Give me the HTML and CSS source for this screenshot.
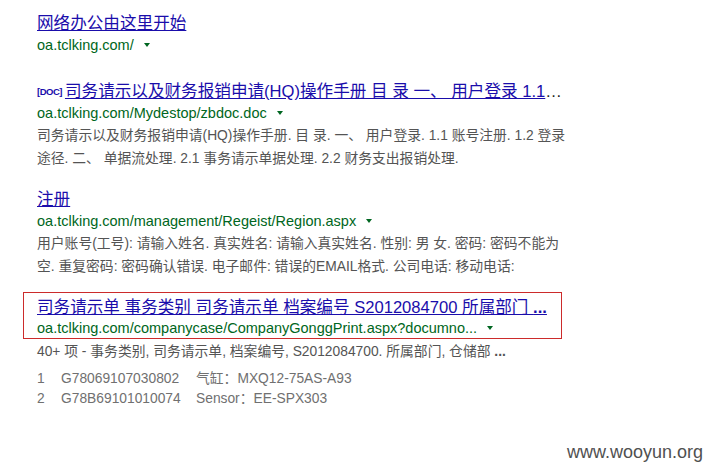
FILE: index.html
```html
<!DOCTYPE html>
<html lang="zh-CN">
<head>
<meta charset="utf-8">
<title>搜索结果</title>
<link rel="stylesheet" href="styles.css">
</head>
<body>
<div class="results">
  <div class="result result--nosnip">
    <a class="title" href="#">网络办公由这里开始</a>
    <div class="url">oa.tclking.com/<span class="arrow"></span></div>
  </div>

  <div class="result">
    <div class="title-row"><span class="filetype">[DOC]</span><a class="title" href="#">司务请示以及财务报销申请(HQ)操作手册 目 录 一、 用户登录 1.1</a>…</div>
    <div class="url">oa.tclking.com/Mydestop/zbdoc.doc<span class="arrow"></span></div>
    <div class="snippet">司务请示以及财务报销申请(HQ)操作手册. 目 录. 一、 用户登录. 1.1 账号注册. 1.2 登录<br>途径. 二、 单据流处理. 2.1 事务请示单据处理. 2.2 财务支出报销处理.</div>
  </div>

  <div class="result">
    <a class="title" href="#">注册</a>
    <div class="url">oa.tclking.com/management/Regeist/Region.aspx<span class="arrow"></span></div>
    <div class="snippet">用户账号(工号): 请输入姓名. 真实姓名: 请输入真实姓名. 性别: 男 女. 密码: 密码不能为<br>空. 重复密码: 密码确认错误. 电子邮件: 错误的EMAIL格式. 公司电话: 移动电话:</div>
  </div>

  <div class="result result--boxed">
    <div class="highlight">
      <a class="title" href="#">司务请示单 事务类别 司务请示单 档案编号 S2012084700 所属部门 <b>...</b></a>
      <div class="url">oa.tclking.com/companycase/CompanyGonggPrint.aspx?documno...<span class="arrow"></span></div>
    </div>
    <div class="snippet">40+ 项 - 事务类别, 司务请示单, 档案编号, S2012084700. 所属部门, 仓储部 <b>...</b></div>
    <div class="table">
      <span>1</span><span>G78069107030802</span><span>气缸：MXQ12-75AS-A93</span>
      <span>2</span><span>G78B69101010074</span><span>Sensor：EE-SPX303</span>
    </div>
  </div>
</div>
<div class="watermark">www.wooyun.org</div>
</body>
</html>
```

FILE: styles.css
```css
html, body {
  margin: 0;
  padding: 0;
  background: #fff;
}

body {
  width: 705px;
  height: 463px;
  position: relative;
  overflow: hidden;
  font-family: "Liberation Sans", Arial, "Noto Sans CJK SC", sans-serif;
}

.results {
  padding: 12px 0 0 37px;
}

.result {
  margin-bottom: 18px;
}

.result--nosnip {
  margin-bottom: 25px;
}

.result--boxed {
  margin-top: -4px;
}

.title,
.title-row {
  display: block;
  font-size: 16.6px;
  line-height: 23px;
  white-space: nowrap;
}

a.title {
  color: #1a0dab;
  text-decoration: underline;
}

.title-row .title {
  display: inline;
}

.title-row {
  color: #222;
}

.filetype {
  margin-right: 3px;
  font-size: 9.5px;
  font-weight: bold;
  letter-spacing: -0.5px;
  color: #1a0dab;
  vertical-align: 2px;
}

.url {
  font-size: 14.5px;
  line-height: 20px;
  color: #006621;
  white-space: nowrap;
}

.highlight .url {
  line-height: 19px;
}

.arrow {
  display: inline-block;
  width: 0;
  height: 0;
  margin-left: 10px;
  border-left: 3.5px solid transparent;
  border-right: 3.5px solid transparent;
  border-top: 4px solid #006621;
  vertical-align: 3px;
}

.snippet {
  margin-top: 1px;
  font-size: 13.8px;
  line-height: 23px;
  color: #545454;
  white-space: nowrap;
}

.highlight {
  width: 539px;
  box-sizing: border-box;
  margin-left: -14px;
  padding: 3px 0 0 13px;
  border: 1px solid #cc2b2b;
}

.table {
  display: grid;
  grid-template-columns: 24px 135px auto;
  grid-auto-rows: 20px;
  margin-top: 6px;
  font-size: 13.8px;
  line-height: 20px;
  color: #707070;
  white-space: nowrap;
}

.watermark {
  position: absolute;
  right: 2px;
  bottom: 1px;
  font-size: 18px;
  line-height: 20px;
  color: #505050;
}
```
